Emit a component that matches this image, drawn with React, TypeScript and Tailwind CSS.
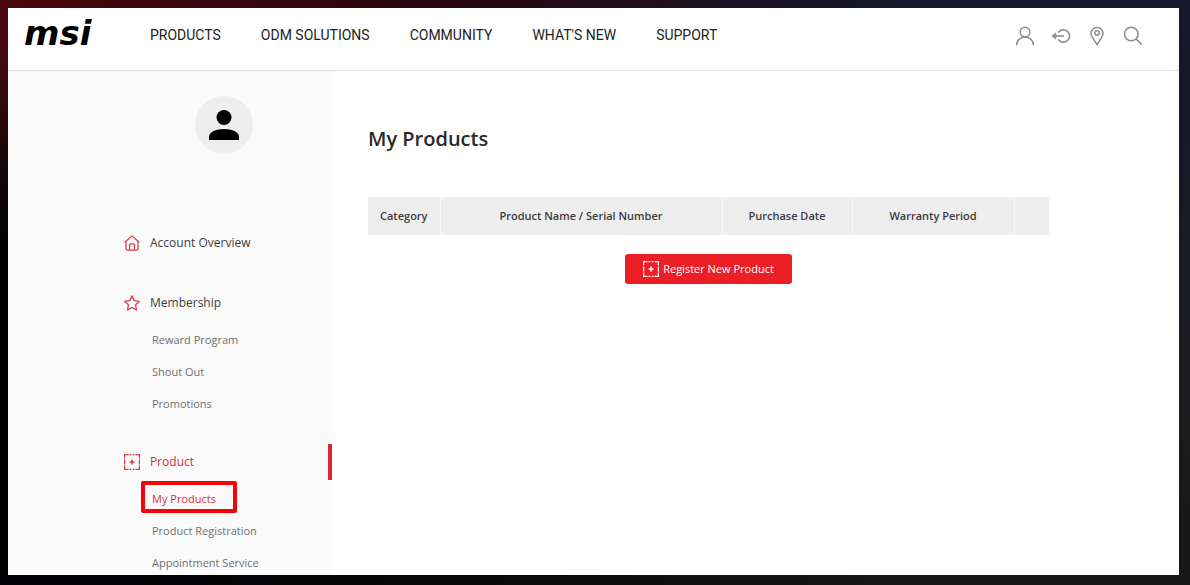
import type { ReactNode } from "react";
import clsx from "clsx";

const topNav = ["PRODUCTS", "ODM SOLUTIONS", "COMMUNITY", "WHAT'S NEW", "SUPPORT"];

const columns = [
  { label: "Category", width: "w-[72px]" },
  { label: "Product Name / Serial Number", width: "w-[282px]" },
  { label: "Purchase Date", width: "w-[130px]" },
  { label: "Warranty Period", width: "w-[162px]" },
];

function UserIcon() {
  return (
    <svg viewBox="0 0 20 20" className="size-5" fill="none" stroke="currentColor" strokeWidth="1.5" aria-hidden>
      <circle cx="10" cy="6" r="4.8" />
      <path d="M1.5 19.2c0-4.6 3.8-8.2 8.5-8.2s8.5 3.6 8.5 8.2" />
    </svg>
  );
}

function LogoutIcon() {
  return (
    <svg viewBox="0 0 20 20" className="size-5" fill="none" stroke="currentColor" strokeWidth="1.6" aria-hidden>
      <path d="M7.2 6.6a6.2 6.2 0 1 1 0 6.8" />
      <path d="M2 10h11" />
      <path d="M.8 10l4-3.2v6.4z" fill="currentColor" strokeWidth="0.5" />
    </svg>
  );
}

function PinIcon() {
  return (
    <svg viewBox="0 0 20 20" className="size-5" fill="none" stroke="currentColor" strokeWidth="1.5" aria-hidden>
      <path d="M10 18.8C8.5 15.4 4 11 4 7.5a6 6 0 0 1 12 0c0 3.5-4.5 7.9-6 11.300z" strokeLinejoin="round" />
      <circle cx="10" cy="7" r="2.2" />
    </svg>
  );
}

function SearchIcon() {
  return (
    <svg viewBox="0 0 20 20" className="size-5" fill="none" stroke="currentColor" strokeWidth="1.6" aria-hidden>
      <circle cx="8.3" cy="8" r="6.8" />
      <path d="M13.2 13l5.6 5.6" />
    </svg>
  );
}

function HomeIcon() {
  return (
    <svg viewBox="0 0 16 16" className="size-4" fill="none" stroke="currentColor" strokeWidth="1.2" aria-hidden>
      <path d="M.8 7.2L8 .9l7.2 6.3M2 6.2v7.6c0 .8.5 1.3 1.3 1.3h9.4c.8 0 1.3-.5 1.3-1.3V6.2" strokeLinejoin="round" />
      <path d="M5.6 15V9.8c0-.6.4-1 1-1h2.8c.6 0 1 .4 1 1V15" />
    </svg>
  );
}

function StarIcon() {
  return (
    <svg viewBox="0 0 16 16" className="size-4" fill="none" stroke="currentColor" strokeWidth="1.3" strokeLinejoin="round" aria-hidden>
      <path d="M8 .9l2.2 4.7 5.1.7-3.7 3.6.9 5.1L8 12.5 3.5 15l.9-5.1L.7 6.3l5.1-.7z" />
    </svg>
  );
}

function ProductIcon() {
  return (
    <svg viewBox="0 0 16 16" className="size-4" fill="none" stroke="currentColor" strokeWidth="1.2" aria-hidden>
      <path d="M.6 4.5V.6h3.9M11.5.6h3.9v3.9M15.4 11.5v3.9h-3.9M4.5 15.4H.6v-3.9" />
      <path d="M5.5.6h1.8M8.7.6h1.8M5.5 15.4h1.8M8.7 15.4h1.8M.6 5.5v5M15.4 5.5v5" />
      <path d="M8 5.6v4.8M5.6 8h4.8" strokeWidth="1.5" />
    </svg>
  );
}

const sections = [
  { label: "Account Overview", icon: HomeIcon, links: [] },
  { label: "Membership", icon: StarIcon, links: ["Reward Program", "Shout Out", "Promotions"] },
  {
    label: "Product",
    icon: ProductIcon,
    active: true,
    links: ["My Products", "Product Registration", "Appointment Service"],
  },
];

const actions = [
  { label: "Account", icon: UserIcon },
  { label: "Log out", icon: LogoutIcon },
  { label: "Location", icon: PinIcon },
  { label: "Search", icon: SearchIcon },
];

function Header() {
  return (
    <header className="flex h-[63px] shrink-0 items-center border-b border-[#dedede] pr-9 pb-2 pl-4">
      <a
        href="#"
        className="w-[126px] shrink-0 pb-1 font-['DejaVu_Sans'] text-[34px] leading-none font-bold text-black italic"
      >
        msi
      </a>
      <nav className="flex gap-10 font-[Roboto,sans-serif] text-sm whitespace-nowrap text-[#222]">
        {topNav.map((item) => (
          <a key={item} href="#">
            {item}
          </a>
        ))}
      </nav>
      <div className="ml-auto flex gap-4 pt-0.5 text-[#8c8c8c]">
        {actions.map((a) => (
          <button key={a.label} type="button" aria-label={a.label}>
            <a.icon />
          </button>
        ))}
      </div>
    </header>
  );
}

function SubLink({ current, children }: { current: boolean; children: ReactNode }) {
  return (
    <li className="relative flex h-8 items-center">
      <a href="#" className={clsx(current ? "text-[#d9303e]" : "text-[#707070]")}>
        {children}
      </a>
      {current && (
        <span className="pointer-events-none absolute -top-0.5 -left-[11px] h-8 w-24 rounded-[2px] border-4 border-[#fb0007]" />
      )}
    </li>
  );
}

function Sidebar() {
  return (
    <aside className="w-[324px] shrink-0 bg-[#fafafa] pt-[25px] pl-[116px]">
      <div className="flex justify-center pr-2">
        <span className="flex size-[58px] items-center justify-center rounded-full bg-[#eee]">
          <svg viewBox="0 0 30 30" className="size-[30px]" fill="#000" aria-hidden>
            <circle cx="15" cy="7.5" r="7.5" />
            <path d="M0 30v-3.5C0 22 7 19 15 19s15 3 15 7.5V30z" />
          </svg>
        </span>
      </div>
      <nav className="mt-[71px] flex flex-col gap-6">
        {sections.map((s) => (
          <section key={s.label}>
            <div className="flex h-9 items-center">
              <span className="text-[#dc3b46]">
                <s.icon />
              </span>
              <a href="#" className={clsx("ml-[10px] text-xs", s.active ? "text-[#d9303e]" : "text-[#404040]")}>
                {s.label}
              </a>
              {s.active && <span className="ml-auto h-9 w-1 bg-[#de2331]" />}
            </div>
            {s.links.length > 0 && (
              <ul className="mt-[3px] ml-7 text-[11px]">
                {s.links.map((l) => (
                  <SubLink key={l} current={l === "My Products"}>
                    {l}
                  </SubLink>
                ))}
              </ul>
            )}
          </section>
        ))}
      </nav>
    </aside>
  );
}

function ProductsPage() {
  return (
    <main className="min-w-0 flex-1 px-9 pt-[52px]">
      <h1 className="text-xl leading-8 font-semibold text-[#2a2a2a]">My Products</h1>
      <div className="mt-[42px] max-w-[681px]">
        <table className="w-full table-fixed border-collapse bg-[#eee] text-[11px] text-[#3c3c3c]">
          <thead>
            <tr className="h-[38px]">
              {columns.map((c) => (
                <th key={c.label} scope="col" className={clsx("border-r border-[#f8f8f8] p-0 font-semibold", c.width)}>
                  {c.label}
                </th>
              ))}
              <td />
            </tr>
          </thead>
        </table>
        <div className="mt-[19px] flex justify-center">
          <button
            type="button"
            className="flex h-[30px] items-center gap-1 rounded-[3px] bg-[#ec1f26] px-[18px] text-[11px] text-white"
          >
            <ProductIcon />
            Register New Product
          </button>
        </div>
      </div>
    </main>
  );
}

export default function App() {
  return (
    <div className="flex h-screen flex-col overflow-hidden bg-[radial-gradient(ellipse_at_0%_70%,#020204_30%,transparent_60%),linear-gradient(to_bottom,transparent,#1c1c1e_70%,#161616),linear-gradient(to_right,#4a060c,#2a0610_35%,#15182c_75%)] pt-2 pr-[11px] pb-[10px] pl-2 font-['Open_Sans',sans-serif]">
      <div className="flex min-h-0 flex-1 flex-col bg-white">
        <Header />
        <div className="flex min-h-0 flex-1 overflow-hidden">
          <Sidebar />
          <ProductsPage />
        </div>
      </div>
    </div>
  );
}
